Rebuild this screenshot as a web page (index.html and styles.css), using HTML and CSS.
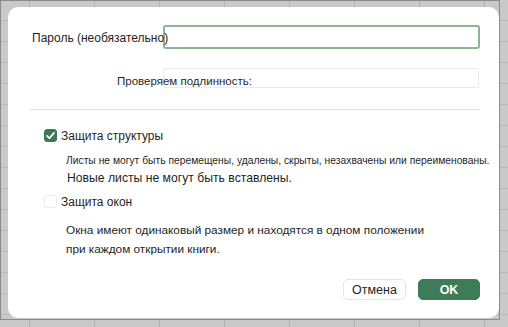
FILE: index.html
```html
<html>
    <head>
        <title>Защитить книгу</title>
        <meta charset="utf-8">
        <link rel="stylesheet" href="styles.css">
    </head>
    <body>
        <div class="frame">
            <div class="dialog">
                <div class="row-pass">
                    <label class="pass-label" for="pass">Пароль (необязательно)</label>
                    <input type="text" id="pass" class="pass-input">
                </div>
                <div class="row-verify">
                    <div class="verify-box"></div>
                    <span class="verify-text">Проверяем подлинность:</span>
                </div>
                <div class="sep"></div>
                <div class="opt">
                    <span class="check checked">
                        <svg width="13" height="13" viewBox="0 0 13 13"><path d="M3 6.8 L5.4 9.2 L10 3.9" fill="none" stroke="#fff" stroke-width="1.7" stroke-linecap="round" stroke-linejoin="round"/></svg>
                    </span>
                    <span class="opt-label">Защита структуры</span>
                </div>
                <div class="note-small">Листы не могут быть перемещены, удалены, скрыты, незахвачены или переименованы.</div>
                <div class="note note-new">Новые листы не могут быть вставлены.</div>
                <div class="opt opt2">
                    <span class="check"></span>
                    <span class="opt-label">Защита окон</span>
                </div>
                <div class="note note-win">Окна имеют одинаковый размер и находятся в одном положении<br>при каждом открытии книги.</div>
                <div class="actions">
                    <button class="btn">Отмена</button>
                    <button class="btn btn-ok">OK</button>
                </div>
            </div>
        </div>
    </body>
</html>
```

FILE: styles.css
```css
body
{
    margin: 0;
    width: 508px;
    height: 327px;
    overflow: hidden;
    background-color: #c9c9c9;
    background-image:
        repeating-linear-gradient(to right, transparent 0, transparent 29px, #b2b2b2 29px, #b2b2b2 30px, transparent 30px, transparent 65px),
        repeating-linear-gradient(to bottom, transparent 0, transparent 20px, #b8b8b8 20px, #b8b8b8 21px);
    font-family: "Liberation Sans", Arial, sans-serif;
    color: #1f1f1f;
}

.frame
{
    width: 500px;
    height: 320px;
    border: 1px solid #8a8a8a;
    padding: 6px 0 0 7px;
    box-sizing: border-box;
}

.dialog
{
    width: 491px;
    height: 311px;
    background: #fff;
    border-radius: 10px;
    box-sizing: border-box;
    padding: 18px 19px 0 24px;
    display: flex;
    flex-direction: column;
    font-size: 12px;
}

.row-pass
{
    display: flex;
    align-items: center;
    height: 24px;
}

.pass-label
{
    width: 131px;
    flex: none;
    white-space: nowrap;
    position: relative;
    z-index: 1;
    padding-top: 1px;
}

.pass-input
{
    flex: 1;
    height: 24px;
    box-sizing: border-box;
    border: 2.5px solid #8fb394;
    border-radius: 3px;
    outline: none;
    margin: 0;
    padding: 0 4px;
}

.row-verify
{
    display: grid;
    grid-template-columns: 131px 1fr;
    align-items: center;
    height: 20px;
    margin-top: 19px;
    margin-right: 1px;
}

.verify-box
{
    grid-column: 2;
    grid-row: 1;
    height: 20px;
    border: 1px solid #eaeaea;
    border-radius: 2px;
    box-sizing: border-box;
}

.verify-text
{
    grid-column: 1 / 3;
    grid-row: 1;
    padding: 5px 0 0 85px;
    font-size: 11.5px;
    white-space: nowrap;
}

.sep
{
    height: 1px;
    background: #e3e3e3;
    margin: 21px 0 0 -2px;
}

.opt
{
    display: flex;
    align-items: center;
    margin-top: 18px;
    padding-left: 12px;
    height: 15px;
}

.check
{
    width: 13px;
    height: 13px;
    box-sizing: border-box;
    border: 1px solid #e2e2e2;
    border-radius: 3px;
    margin-right: 4px;
    display: inline-block;
}

.check.checked
{
    background: #3d7a53;
    border-color: #3d7a53;
}

.check svg
{
    display: block;
    margin: -1px;
}

.opt-label
{
    white-space: nowrap;
}

.note-small
{
    font-size: 10.3px;
    padding-left: 34px;
    margin-top: 12px;
    white-space: nowrap;
}

.note
{
    padding-left: 35px;
    margin-top: 3px;
    white-space: nowrap;
    line-height: 18px;
}

.note-new
{
    font-size: 12.2px;
}

.opt2
{
    margin-top: 7px;
}

.opt2 .check
{
    border-color: #ececec;
}

.note-win
{
    padding-left: 34px;
    margin-top: 12px;
    font-size: 11.8px;
    line-height: 19px;
}

.actions
{
    display: flex;
    justify-content: flex-end;
    gap: 12px;
    margin-top: auto;
    margin-bottom: 18px;
}

.btn
{
    width: 63px;
    height: 21px;
    font-family: inherit;
    font-size: 12.5px;
    border: 1px solid #e4e4e4;
    border-radius: 5px;
    background: #fff;
    color: #1f1f1f;
    padding: 0;
}

.btn-ok
{
    width: 62px;
    background: #3e7b57;
    border-color: #3e7b57;
    color: #fff;
    font-weight: bold;
}
```
